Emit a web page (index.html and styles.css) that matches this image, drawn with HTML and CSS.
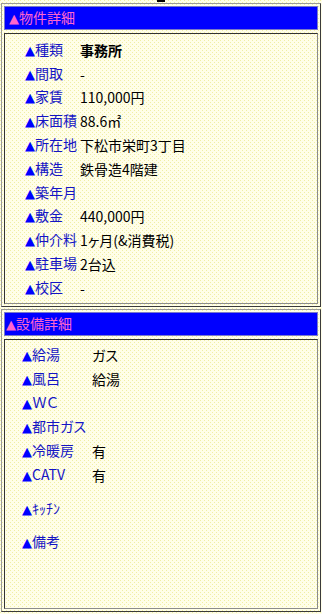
FILE: index.html
```html
<!DOCTYPE html>
<html lang="ja">
<head>
<meta charset="utf-8">
<title>物件詳細</title>
<link rel="stylesheet" href="styles.css">
</head>
<body>
<div class="topmark"><span class="topmark-bar"></span></div>

<section class="box">
  <div class="head head-first"><span class="tri">▲</span>物件詳細</div>
  <div class="body body-first">
    <dl class="spec">
      <dt><span class="tri">▲</span>種類</dt><dd class="strong">事務所</dd>
      <dt><span class="tri">▲</span>間取</dt><dd>-</dd>
      <dt><span class="tri">▲</span>家賃</dt><dd>110,000円</dd>
      <dt><span class="tri">▲</span>床面積</dt><dd>88.6㎡</dd>
      <dt><span class="tri">▲</span>所在地</dt><dd>下松市栄町3丁目</dd>
      <dt><span class="tri">▲</span>構造</dt><dd>鉄骨造4階建</dd>
      <dt><span class="tri">▲</span>築年月</dt><dd></dd>
      <dt><span class="tri">▲</span>敷金</dt><dd>440,000円</dd>
      <dt><span class="tri">▲</span>仲介料</dt><dd>1ヶ月(&amp;消費税)</dd>
      <dt><span class="tri">▲</span>駐車場</dt><dd>2台込</dd>
      <dt><span class="tri">▲</span>校区</dt><dd>-</dd>
    </dl>
  </div>
</section>

<section class="box box-second">
  <div class="head head-second"><span class="tri">▲</span>設備詳細</div>
  <div class="body body-second">
    <dl class="equip">
      <dt><span class="tri">▲</span>給湯</dt><dd>ガス</dd>
      <dt><span class="tri">▲</span>風呂</dt><dd>給湯</dd>
      <dt><span class="tri">▲</span>ＷＣ</dt><dd></dd>
      <dt><span class="tri">▲</span>都市ガス</dt><dd></dd>
      <dt><span class="tri">▲</span>冷暖房</dt><dd>有</dd>
      <dt><span class="tri">▲</span>CATV</dt><dd>有</dd>
      <dt><span class="tri">▲</span>ｷｯﾁﾝ</dt><dd></dd>
      <dt><span class="tri">▲</span>備考</dt><dd></dd>
    </dl>
  </div>
</section>
</body>
</html>
```

FILE: styles.css
```css
html, body {
  margin: 0;
  padding: 0;
}

body {
  width: 322px;
  height: 614px;
  overflow: hidden;
  font-family: "Noto Sans CJK JP", "Noto Sans", sans-serif;
  font-size: 14px;
  font-feature-settings: "palt";
  color: #000;
  background-color: #fffee8;
  background-image:
    conic-gradient(from 270deg at 1px 1px, #f0eea4 90deg, transparent 0),
    conic-gradient(from 270deg at 1px 1px, #f0eea4 90deg, transparent 0);
  background-size: 4px 4px, 4px 4px;
  background-position: 0 0, 2px 2px;
}

.topmark {
  height: 3px;
}

.topmark-bar {
  display: block;
  width: 8px;
  height: 2px;
  margin-left: 157px;
  background: #000;
}

.box {
  margin: 0 1px;
  padding: 2px;
  border: 1px solid;
  border-color: #9a9a9a #3a3a3a #3a3a3a #9a9a9a;
}

.box-second {
  margin-top: 2px;
}

.head {
  height: 24px;
  box-sizing: border-box;
  background: #0000ff;
  border: 1px solid #7a7ac8;
  color: #ff66cc;
  font-size: 14px;
  line-height: 21px;
  white-space: nowrap;
}

.head .tri {
  font-size: 13px;
  color: #ff66cc;
  margin-right: 0;
}

.head-first {
  padding-left: 4px;
}

.head-second {
  padding-left: 1px;
}

.body {
  margin-top: 3px;
  box-sizing: border-box;
  border: 1px solid;
  border-color: #333 #8c8c8c #8c8c8c #333;
}

.body-first {
  height: 271px;
  padding: 4px 0 0 20px;
}

.body-second {
  height: 270px;
  padding: 3px 0 0 17px;
}

.tri {
  font-family: "DejaVu Sans", sans-serif;
  font-size: 13px;
  color: #0000ff;
  margin-right: 0;
}

dl {
  margin: 0;
  display: grid;
  align-items: center;
}

dt, dd {
  margin: 0;
  line-height: 16px;
  white-space: nowrap;
}

dt {
  color: #1414c4;
}

.spec {
  grid-template-columns: 55px 1fr;
  grid-auto-rows: 23.8px;
}

.equip {
  grid-template-columns: 70px 1fr;
  grid-template-rows: repeat(6, 24px) 44px 22px;
}

.strong {
  font-weight: bold;
}
```
